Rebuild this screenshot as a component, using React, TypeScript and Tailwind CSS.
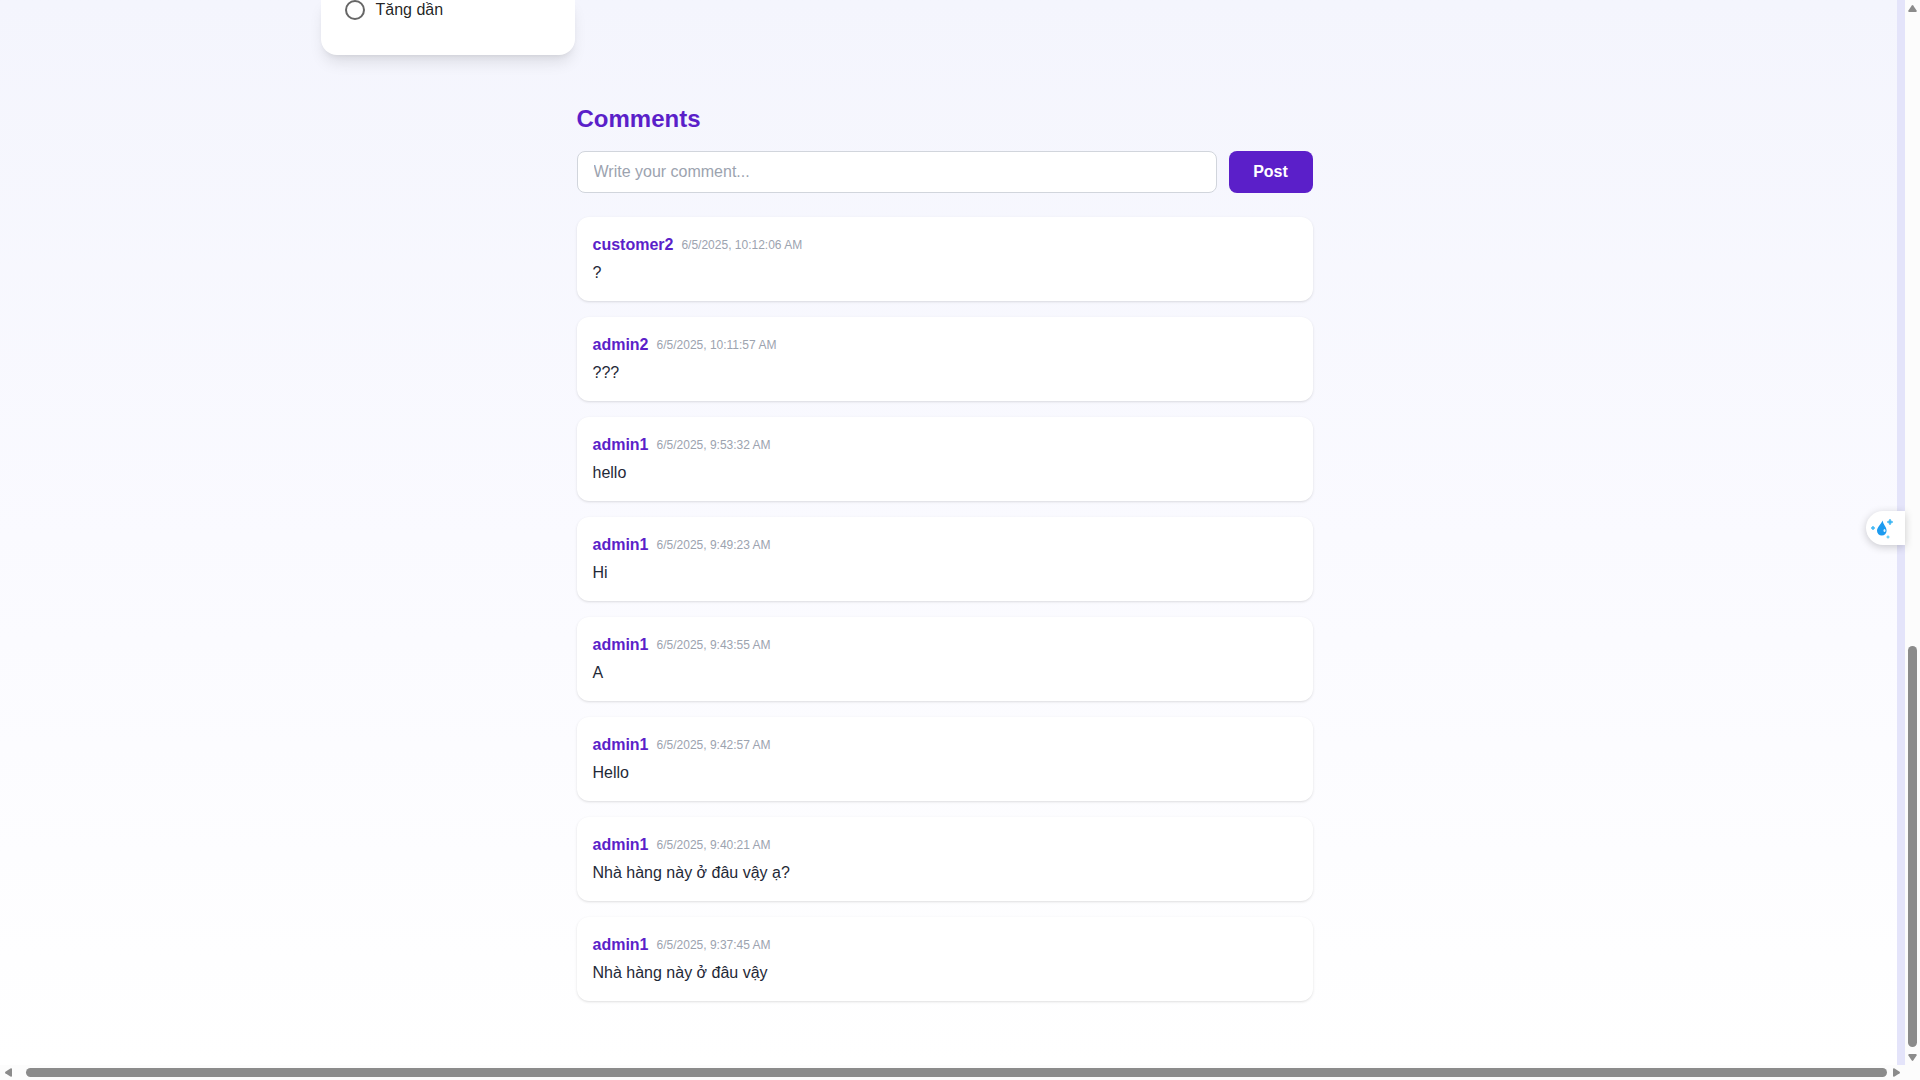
const comments = [
  { id: 8, author: 'customer2', time: '6/5/2025, 10:12:06 AM', text: '?' },
  { id: 7, author: 'admin2', time: '6/5/2025, 10:11:57 AM', text: '???' },
  { id: 6, author: 'admin1', time: '6/5/2025, 9:53:32 AM', text: 'hello' },
  { id: 5, author: 'admin1', time: '6/5/2025, 9:49:23 AM', text: 'Hi' },
  { id: 4, author: 'admin1', time: '6/5/2025, 9:43:55 AM', text: 'A' },
  { id: 3, author: 'admin1', time: '6/5/2025, 9:42:57 AM', text: 'Hello' },
  { id: 2, author: 'admin1', time: '6/5/2025, 9:40:21 AM', text: 'Nhà hàng này ở đâu vậy ạ?' },
  { id: 1, author: 'admin1', time: '6/5/2025, 9:37:45 AM', text: 'Nhà hàng này ở đâu vậy' },
];

function SortPanel() {
  return (
    <aside className="w-[254px] rounded-b-2xl bg-white px-6 pb-[33px] shadow-[0_10px_15px_-3px_rgba(0,0,0,0.1),0_4px_6px_-4px_rgba(0,0,0,0.1)]">
      <label className="-mt-0.5 flex h-6 items-center gap-[11px] text-base text-black/87">
        <input
          type="radio"
          name="sort"
          className="size-5 appearance-none rounded-full border-2 border-[#666666] checked:border-[#5b21c9]"
        />
        Tăng dần
      </label>
    </aside>
  );
}

function CommentForm() {
  return (
    <form className="mb-6 flex gap-3" onSubmit={(e) => e.preventDefault()}>
      <input
        type="text"
        aria-label="Write your comment"
        placeholder="Write your comment..."
        className="min-w-0 flex-1 rounded-lg border border-gray-300 bg-white px-4 py-2 text-base text-gray-800 placeholder:text-[#9ca3af]"
      />
      <button type="submit" className="min-w-[84px] rounded-lg bg-[#5b1fc9] px-6 text-base font-bold text-white">
        Post
      </button>
    </form>
  );
}

function CommentList() {
  return (
    <ul className="flex flex-col gap-4">
      {comments.map((c) => (
        <li key={c.id} className="rounded-xl bg-white p-4 shadow-[0_1px_3px_rgba(0,0,0,0.1),0_1px_2px_-1px_rgba(0,0,0,0.1)]">
          <div className="mb-1 flex items-center gap-2">
            <span className="text-base font-bold text-[#5b1fc9]">{c.author}</span>
            <time className="text-xs text-[#9ca3af]">{c.time}</time>
          </div>
          <p className="text-base text-[#1f2937]">{c.text}</p>
        </li>
      ))}
    </ul>
  );
}

function VerticalScrollbar() {
  return (
    <div aria-hidden="true" className="flex w-[15px] flex-col items-center bg-[#fcfcfc]">
      <svg className="mt-1 h-2 w-[9px] shrink-0" viewBox="0 0 9 8" fill="#8b8b8b">
        <path d="M3.8 1.4Q4.5.5 5.2 1.4L8.6 6.4Q9 8 8 8H1Q0 8 .4 6.4Z" />
      </svg>
      <div className="flex-[634]" />
      <div className="w-[9px] flex-[401] rounded-full bg-[#8b8b8b]" />
      <svg className="mt-[7px] mb-[3px] h-2 w-[9px] shrink-0" viewBox="0 0 9 8" fill="#8b8b8b">
        <path d="M3.8 6.6Q4.5 7.5 5.2 6.6L8.6 1.6Q9 0 8 0H1Q0 0 .4 1.6Z" />
      </svg>
    </div>
  );
}

function HorizontalScrollbar() {
  return (
    <div aria-hidden="true" className="flex h-[15px] items-center bg-[#fcfcfc] pr-[19px] pl-1">
      <svg className="h-[9px] w-2 shrink-0" viewBox="0 0 8 9" fill="#8b8b8b">
        <path d="M1.4 3.8Q.5 4.5 1.4 5.2L6.4 8.6Q8 9 8 8V1Q8 0 6.4.4Z" />
      </svg>
      <div className="ml-[14px] h-[9px] flex-1 rounded-full bg-[#8b8b8b]" />
      <svg className="ml-[6px] h-[9px] w-2 shrink-0" viewBox="0 0 8 9" fill="#8b8b8b">
        <path d="M6.6 3.8Q7.5 4.5 6.6 5.2L1.6 8.6Q0 9 0 8V1Q0 0 1.6.4Z" />
      </svg>
    </div>
  );
}

function AssistantButton() {
  return (
    <button
      type="button"
      aria-label="Open assistant"
      className="absolute top-[511px] right-0 h-[34px] w-[39px] rounded-l-full bg-white pl-1 shadow-[0_2px_8px_rgba(0,0,0,0.2)]"
    >
      <svg className="size-6" viewBox="0 0 24 24" fill="none">
        <path d="M12.500 4.500C11 8.500 7 11 7 14.800A4.800 4.800 0 0 0 16.600 14.800C16.600 11 13.500 9 12.500 4.500Z" fill="#1c9bf0" />
        <ellipse cx="14.500" cy="14.500" rx="1" ry="1.600" fill="#e4f5ff" />
        <path d="M20 3L21 5L23 6L21 7L20 9L19 7L17 6L19 5Z" fill="#3ab5f4" stroke="#3ab5f4" strokeWidth=".6" />
        <path d="M3 10L3.700 11.300L5 12L3.700 12.700L3 14L2.300 12.700L1 12L2.300 11.300Z" fill="#3ab5f4" stroke="#3ab5f4" strokeWidth=".6" />
        <path d="M18 19.500L18.500 20.500L19.500 21L18.500 21.500L18 22.500L17.500 21.500L16.500 21L17.500 20.500Z" fill="#45c4f5" stroke="#45c4f5" strokeWidth=".5" />
      </svg>
    </button>
  );
}

export default function App() {
  return (
    <div className="flex h-screen flex-col overflow-hidden bg-white font-['Liberation_Sans',Arial,sans-serif]">
      <div className="flex min-h-0 flex-1">
        <div className="relative flex min-w-0 flex-1 border-r-8 border-[#e4e4fa]">
          <main className="min-w-0 flex-1 bg-linear-to-b from-[#f4f5fd] via-[#fafaff] to-white pr-2">
            <div className="mx-auto max-w-7xl px-4">
              <SortPanel />
            </div>
            <section className="mx-auto mt-12 max-w-3xl px-4">
              <h2 className="mb-4 text-2xl font-bold text-[#5b1fc9]">Comments</h2>
              <CommentForm />
              <CommentList />
            </section>
          </main>
          <div className="absolute top-0 -right-2 h-full">
            <AssistantButton />
          </div>
        </div>
        <VerticalScrollbar />
      </div>
      <HorizontalScrollbar />
    </div>
  );
}
